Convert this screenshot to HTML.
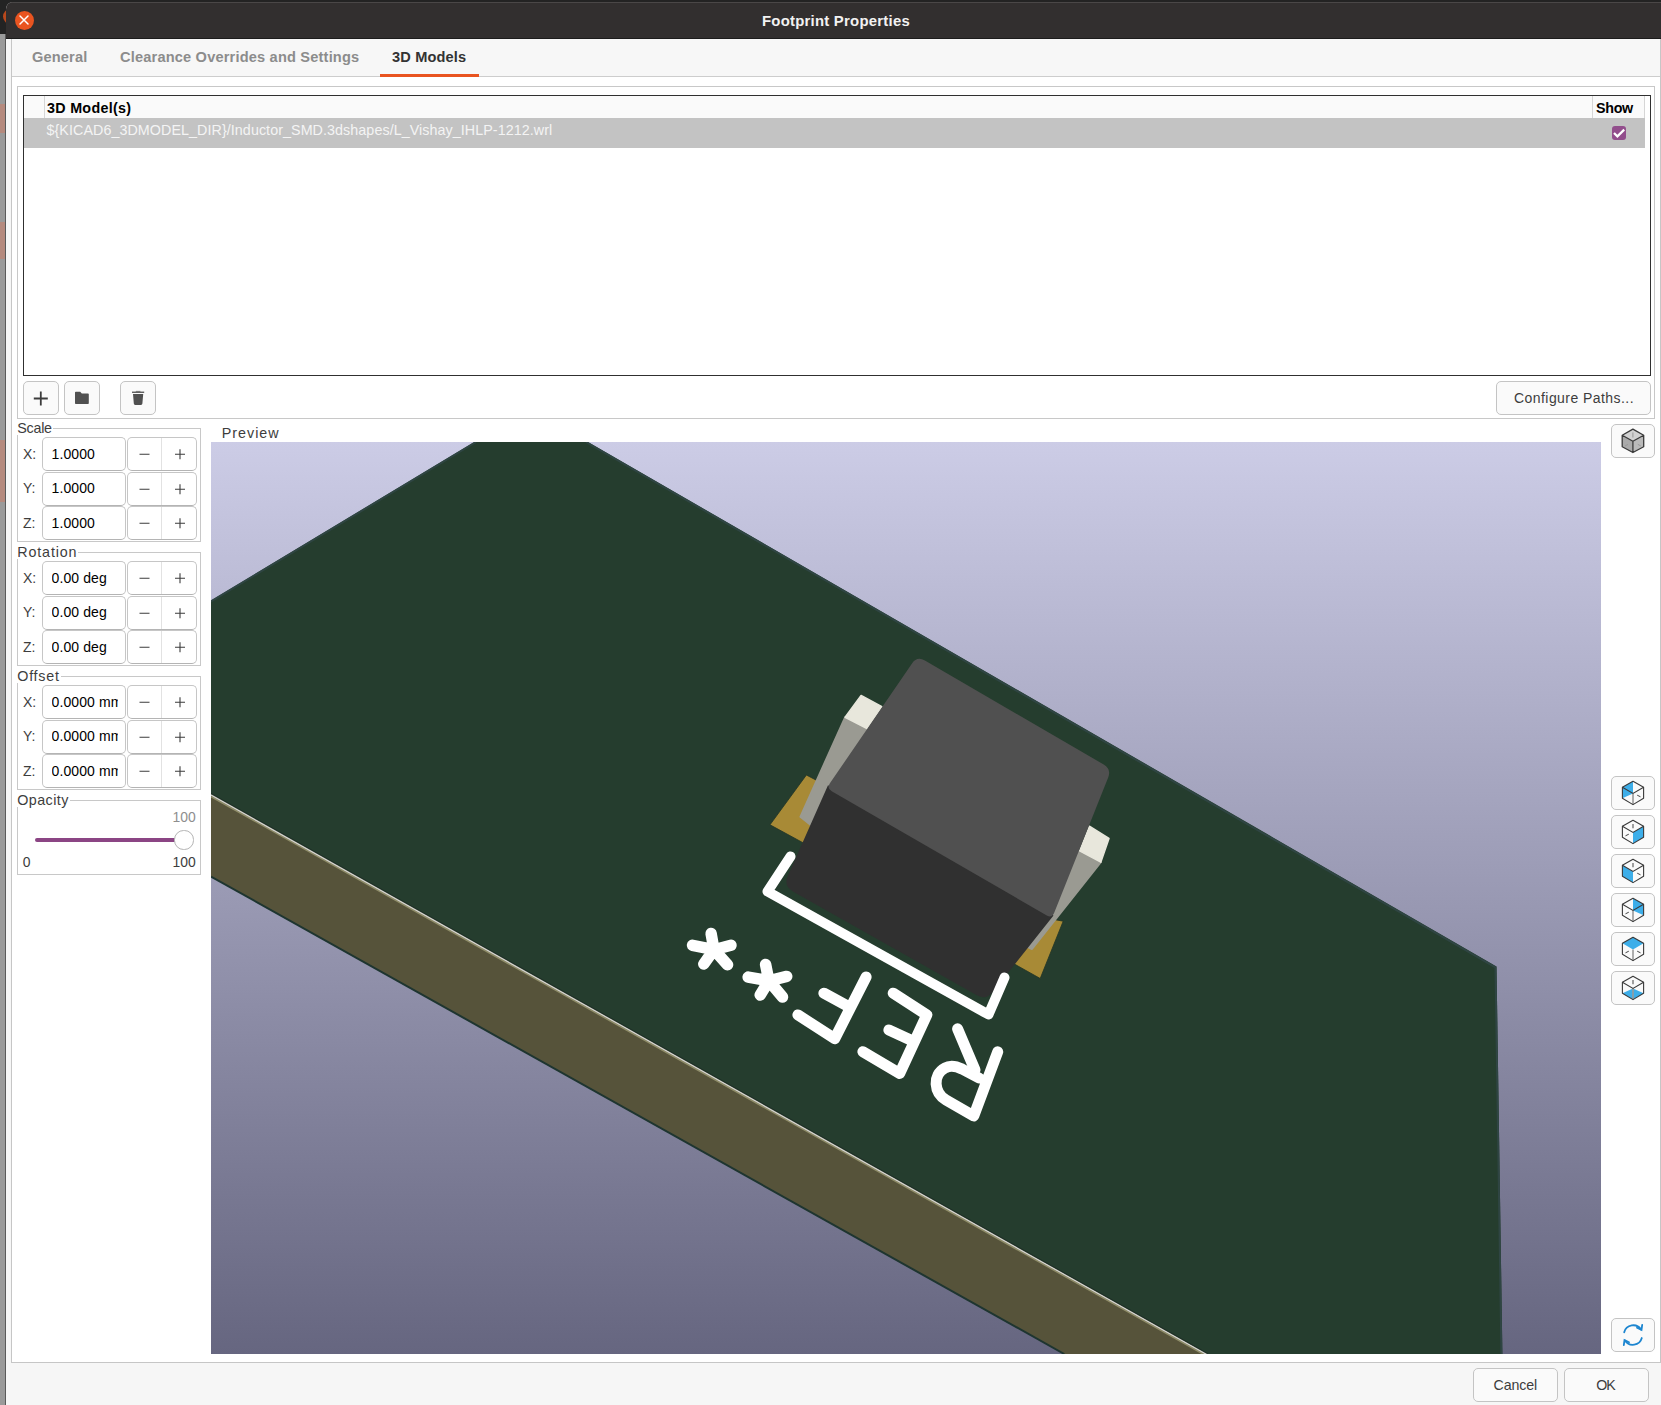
<!DOCTYPE html>
<html><head><meta charset="utf-8"><style>
*{margin:0;padding:0;box-sizing:border-box}
html,body{width:1661px;height:1405px;overflow:hidden;background:#969696;font-family:"Liberation Sans",sans-serif}
.a{position:absolute}
.t{position:absolute;white-space:nowrap;line-height:1}
.btn{position:absolute;background:#fafafa;border:1px solid #c4c4c4;border-radius:5px}
.box{position:absolute;border:1px solid #c8c8c8}
.fld{position:absolute;background:#fff;border:1px solid #c6c6c6;border-bottom-color:#b4b4b4;border-radius:5px}
.spin{position:absolute;background:#fff;border:1px solid #c6c6c6;border-bottom-color:#b4b4b4;border-radius:5px}
.lbl{color:#3d3d3d}
.val{color:#000}
</style></head><body>
<div class="a" style="left:0;top:0;width:1661px;height:1405px;overflow:hidden">
<div class="a" style="left:0;top:0;width:1661px;height:38px;background:#232323"></div>
<div class="a" style="left:0;top:0;width:6px;height:34px;background:#232323"></div>
<div class="a" style="left:0;top:34px;width:6px;height:1371px;background:#9a9a9a"></div>
<div class="a" style="left:0;top:104px;width:6px;height:29px;background:#b58a7e"></div>
<div class="a" style="left:0;top:222px;width:6px;height:37px;background:#b58a7e"></div>
<div class="a" style="left:0;top:440px;width:6px;height:62px;background:#b58a7e"></div>
<div class="a" style="left:5px;top:34px;width:1px;height:1371px;background:#5a5a5a"></div>
<div class="a" style="left:0;top:0;width:6px;height:38px;overflow:hidden"><div class="a" style="left:2.5px;top:9px;width:15px;height:15px;border-radius:50%;background:#b9481c"></div></div>
<div class="a" style="left:6px;top:2px;width:1655px;height:1403px;background:#f6f6f6;border-top-left-radius:7px;overflow:hidden"><div class="a" style="left:0;top:0;width:1655px;height:36px;background:#322f2f;border-top:1px solid #4a4747"></div><div class="a" style="left:0;top:36px;width:1655px;height:1px;background:#1c1c1c"></div></div>
<div class="a" style="left:14.5px;top:10.5px;width:19px;height:19px;border-radius:50%;background:#e95420"></div>
<svg class="a" style="left:14px;top:10px" width="20" height="20"><path d="M6 6L14 14M14 6L6 14" stroke="#fff" stroke-width="1.5" stroke-linecap="round"/></svg>
<div class="t" style="left:762px;top:13.61px;font-size:14.9px;color:#f2f2f2;font-weight:bold;letter-spacing:0.24px;">Footprint Properties</div>
<div class="a" style="left:11px;top:39px;width:1650px;height:1324px;background:#fff;border-left:1px solid #c6c6c6;border-right:1px solid #c6c6c6;border-bottom:1px solid #c6c6c6"></div>
<div class="a" style="left:12px;top:39px;width:1648px;height:38px;background:#f7f7f7;border-bottom:1px solid #cdcdcd"></div>
<div class="a" style="left:380px;top:74px;width:99px;height:3px;background:#e95420"></div>
<div class="t" style="left:32px;top:50.16px;font-size:14.6px;color:#8c8c8c;font-weight:bold;letter-spacing:0.15px;">General</div>
<div class="t" style="left:120px;top:50.16px;font-size:14.6px;color:#8c8c8c;font-weight:bold;letter-spacing:0.18px;">Clearance Overrides and Settings</div>
<div class="t" style="left:392px;top:50.16px;font-size:14.6px;color:#333333;font-weight:bold;letter-spacing:0.15px;">3D Models</div>
<div class="box" style="left:17px;top:86px;width:1638px;height:333px"></div>
<div class="a" style="left:23px;top:95px;width:1628px;height:281px;border:1px solid #303030;background:#fff"></div>
<div class="a" style="left:24px;top:96px;width:1621px;height:22px;background:#fafafa"></div>
<div class="a" style="left:44px;top:96px;width:1px;height:22px;background:#d6d6d6"></div>
<div class="a" style="left:1592px;top:96px;width:1px;height:22px;background:#d6d6d6"></div>
<div class="a" style="left:1644px;top:96px;width:1px;height:22px;background:#d6d6d6"></div>
<div class="a" style="left:24px;top:118px;width:1621px;height:30px;background:#c3c3c3"></div>
<div class="t" style="left:47px;top:100.92px;font-size:14.3px;color:#000;font-weight:bold;letter-spacing:0.3px;">3D Model(s)</div>
<div class="t" style="left:1596px;top:100.92px;font-size:14.3px;color:#000;font-weight:bold;letter-spacing:-0.3px;">Show</div>
<div class="t" style="left:46.5px;top:122.62px;font-size:14.3px;color:#f4f4f4;letter-spacing:0.07px;">${KICAD6_3DMODEL_DIR}/Inductor_SMD.3dshapes/L_Vishay_IHLP-1212.wrl</div>
<div class="a" style="left:1612px;top:126px;width:14px;height:14px;border-radius:3px;background:#924e8c"></div>
<svg class="a" style="left:1612px;top:126px" width="14" height="14"><path d="M2 7L5.4 10.4L12.2 3.6" stroke="#fff" stroke-width="2.2" fill="none"/></svg>
<div class="btn" style="left:23px;top:381px;width:36px;height:34px"></div>
<div class="btn" style="left:64px;top:381px;width:36px;height:34px"></div>
<div class="btn" style="left:120px;top:381px;width:36px;height:34px"></div>
<svg class="a" style="left:23px;top:381px" width="36" height="34"><path d="M17.8 10.5V24.5M10.8 17.5H24.8" stroke="#3c3c3c" stroke-width="1.8"/></svg>
<svg class="a" style="left:64px;top:381px" width="36" height="34"><path d="M11 11.5Q11 10.7 11.8 10.7H16.2L17.8 12.4H24Q24.8 12.4 24.8 13.2V22.3Q24.8 23.1 24 23.1H11.8Q11 23.1 11 22.3Z" fill="#505050"/></svg>
<svg class="a" style="left:120px;top:381px" width="36" height="34"><path d="M12 10.6H24.2V11.9H12Z" fill="#505050"/><path d="M15.8 9.9H20.4V10.6H15.8Z" fill="#505050"/><path d="M13 12.9H23.2L22.4 22.6Q22.3 23.9 21 23.9H15.2Q13.9 23.9 13.8 22.6Z" fill="#505050"/></svg>
<div class="btn" style="left:1496px;top:381px;width:155px;height:34px"></div>
<div class="t" style="left:1514px;top:390.87px;font-size:14.0px;color:#3d3d3d;letter-spacing:0.44px;">Configure Paths...</div>
<div class="t" style="left:221.8px;top:425.92px;font-size:14.3px;color:#3d3d3d;letter-spacing:1.0px;">Preview</div>
<div class="box" style="left:17px;top:428.0px;width:184px;height:114px"></div>
<div class="t" style="left:17.3px;top:420.82px;font-size:14.3px;color:#3d3d3d;letter-spacing:-0.25px;background:#fff;padding-right:1px;">Scale</div>
<div class="fld" style="left:42px;top:437.3px;width:84px;height:34px"></div>
<div class="t" style="left:23px;top:447.17px;font-size:14px;color:#3d3d3d;">X:</div>
<div class="t" style="left:51.5px;top:447.17px;font-size:14px;color:#000;letter-spacing:0.1px;width:66px;overflow:hidden;padding-bottom:4px;">1.0000</div>
<div class="spin" style="left:126.5px;top:437.3px;width:70.5px;height:34px"></div>
<div class="a" style="left:161px;top:438.3px;width:1px;height:32px;background:#e2e2e2"></div>
<svg class="a" style="left:126.5px;top:437.3px" width="71" height="34"><path d="M12.5 17.3H22.5M48 17.3H58M53 12.3V22.3" stroke="#3c3c3c" stroke-width="1.1"/></svg>
<div class="fld" style="left:42px;top:471.6px;width:84px;height:34px"></div>
<div class="t" style="left:23px;top:481.47px;font-size:14px;color:#3d3d3d;">Y:</div>
<div class="t" style="left:51.5px;top:481.47px;font-size:14px;color:#000;letter-spacing:0.1px;width:66px;overflow:hidden;padding-bottom:4px;">1.0000</div>
<div class="spin" style="left:126.5px;top:471.6px;width:70.5px;height:34px"></div>
<div class="a" style="left:161px;top:472.6px;width:1px;height:32px;background:#e2e2e2"></div>
<svg class="a" style="left:126.5px;top:471.6px" width="71" height="34"><path d="M12.5 17.3H22.5M48 17.3H58M53 12.3V22.3" stroke="#3c3c3c" stroke-width="1.1"/></svg>
<div class="fld" style="left:42px;top:505.9px;width:84px;height:34px"></div>
<div class="t" style="left:23px;top:515.77px;font-size:14px;color:#3d3d3d;">Z:</div>
<div class="t" style="left:51.5px;top:515.77px;font-size:14px;color:#000;letter-spacing:0.1px;width:66px;overflow:hidden;padding-bottom:4px;">1.0000</div>
<div class="spin" style="left:126.5px;top:505.9px;width:70.5px;height:34px"></div>
<div class="a" style="left:161px;top:506.9px;width:1px;height:32px;background:#e2e2e2"></div>
<svg class="a" style="left:126.5px;top:505.9px" width="71" height="34"><path d="M12.5 17.3H22.5M48 17.3H58M53 12.3V22.3" stroke="#3c3c3c" stroke-width="1.1"/></svg>
<div class="box" style="left:17px;top:552.0px;width:184px;height:114px"></div>
<div class="t" style="left:17.3px;top:544.82px;font-size:14.3px;color:#3d3d3d;letter-spacing:0.86px;background:#fff;padding-right:1px;">Rotation</div>
<div class="fld" style="left:42px;top:561.3px;width:84px;height:34px"></div>
<div class="t" style="left:23px;top:571.17px;font-size:14px;color:#3d3d3d;">X:</div>
<div class="t" style="left:51.5px;top:571.17px;font-size:14px;color:#000;letter-spacing:0.1px;width:66px;overflow:hidden;padding-bottom:4px;">0.00 deg</div>
<div class="spin" style="left:126.5px;top:561.3px;width:70.5px;height:34px"></div>
<div class="a" style="left:161px;top:562.3px;width:1px;height:32px;background:#e2e2e2"></div>
<svg class="a" style="left:126.5px;top:561.3px" width="71" height="34"><path d="M12.5 17.3H22.5M48 17.3H58M53 12.3V22.3" stroke="#3c3c3c" stroke-width="1.1"/></svg>
<div class="fld" style="left:42px;top:595.6px;width:84px;height:34px"></div>
<div class="t" style="left:23px;top:605.47px;font-size:14px;color:#3d3d3d;">Y:</div>
<div class="t" style="left:51.5px;top:605.47px;font-size:14px;color:#000;letter-spacing:0.1px;width:66px;overflow:hidden;padding-bottom:4px;">0.00 deg</div>
<div class="spin" style="left:126.5px;top:595.6px;width:70.5px;height:34px"></div>
<div class="a" style="left:161px;top:596.6px;width:1px;height:32px;background:#e2e2e2"></div>
<svg class="a" style="left:126.5px;top:595.6px" width="71" height="34"><path d="M12.5 17.3H22.5M48 17.3H58M53 12.3V22.3" stroke="#3c3c3c" stroke-width="1.1"/></svg>
<div class="fld" style="left:42px;top:629.9px;width:84px;height:34px"></div>
<div class="t" style="left:23px;top:639.77px;font-size:14px;color:#3d3d3d;">Z:</div>
<div class="t" style="left:51.5px;top:639.77px;font-size:14px;color:#000;letter-spacing:0.1px;width:66px;overflow:hidden;padding-bottom:4px;">0.00 deg</div>
<div class="spin" style="left:126.5px;top:629.9px;width:70.5px;height:34px"></div>
<div class="a" style="left:161px;top:630.9px;width:1px;height:32px;background:#e2e2e2"></div>
<svg class="a" style="left:126.5px;top:629.9px" width="71" height="34"><path d="M12.5 17.3H22.5M48 17.3H58M53 12.3V22.3" stroke="#3c3c3c" stroke-width="1.1"/></svg>
<div class="box" style="left:17px;top:676.0px;width:184px;height:114px"></div>
<div class="t" style="left:17.3px;top:668.82px;font-size:14.3px;color:#3d3d3d;letter-spacing:0.74px;background:#fff;padding-right:1px;">Offset</div>
<div class="fld" style="left:42px;top:685.3px;width:84px;height:34px"></div>
<div class="t" style="left:23px;top:695.17px;font-size:14px;color:#3d3d3d;">X:</div>
<div class="t" style="left:51.5px;top:695.17px;font-size:14px;color:#000;letter-spacing:0.1px;width:66px;overflow:hidden;padding-bottom:4px;">0.0000 mm</div>
<div class="spin" style="left:126.5px;top:685.3px;width:70.5px;height:34px"></div>
<div class="a" style="left:161px;top:686.3px;width:1px;height:32px;background:#e2e2e2"></div>
<svg class="a" style="left:126.5px;top:685.3px" width="71" height="34"><path d="M12.5 17.3H22.5M48 17.3H58M53 12.3V22.3" stroke="#3c3c3c" stroke-width="1.1"/></svg>
<div class="fld" style="left:42px;top:719.6px;width:84px;height:34px"></div>
<div class="t" style="left:23px;top:729.47px;font-size:14px;color:#3d3d3d;">Y:</div>
<div class="t" style="left:51.5px;top:729.47px;font-size:14px;color:#000;letter-spacing:0.1px;width:66px;overflow:hidden;padding-bottom:4px;">0.0000 mm</div>
<div class="spin" style="left:126.5px;top:719.6px;width:70.5px;height:34px"></div>
<div class="a" style="left:161px;top:720.6px;width:1px;height:32px;background:#e2e2e2"></div>
<svg class="a" style="left:126.5px;top:719.6px" width="71" height="34"><path d="M12.5 17.3H22.5M48 17.3H58M53 12.3V22.3" stroke="#3c3c3c" stroke-width="1.1"/></svg>
<div class="fld" style="left:42px;top:753.9px;width:84px;height:34px"></div>
<div class="t" style="left:23px;top:763.77px;font-size:14px;color:#3d3d3d;">Z:</div>
<div class="t" style="left:51.5px;top:763.77px;font-size:14px;color:#000;letter-spacing:0.1px;width:66px;overflow:hidden;padding-bottom:4px;">0.0000 mm</div>
<div class="spin" style="left:126.5px;top:753.9px;width:70.5px;height:34px"></div>
<div class="a" style="left:161px;top:754.9px;width:1px;height:32px;background:#e2e2e2"></div>
<svg class="a" style="left:126.5px;top:753.9px" width="71" height="34"><path d="M12.5 17.3H22.5M48 17.3H58M53 12.3V22.3" stroke="#3c3c3c" stroke-width="1.1"/></svg>
<div class="box" style="left:17px;top:800px;width:184px;height:75px"></div>
<div class="t" style="left:17.3px;top:792.82px;font-size:14.3px;color:#3d3d3d;letter-spacing:0.43px;background:#fff;padding-right:1px;">Opacity</div>
<div class="t" style="left:172.5px;top:811.15px;font-size:13.9px;color:#8e8e8e;">100</div>
<div class="a" style="left:35px;top:838.2px;width:142px;height:3.6px;border-radius:2px;background:#8b4584"></div>
<div class="a" style="left:174.4px;top:830.4px;width:19.2px;height:19.2px;border-radius:50%;background:#fff;border:1px solid #b4b4b4"></div>
<div class="t" style="left:22.8px;top:855.75px;font-size:13.9px;color:#3d3d3d;">0</div>
<div class="t" style="left:172.5px;top:855.75px;font-size:13.9px;color:#3d3d3d;">100</div>
<div class="btn" style="left:1611px;top:424px;width:44px;height:34px"></div>
<svg class="a" style="left:1611px;top:424px" width="44" height="34"><g transform="translate(-1611 -424)">
<polygon points="1632.9,429.1 1643.7,435.3 1632.9,441.2 1622.2,435.3" fill="#d2d2d2"/>
<polygon points="1622.2,435.3 1632.9,441.2 1632.9,452.5 1622.2,446.8" fill="#aaaaaa"/>
<polygon points="1632.9,441.2 1643.7,435.3 1643.7,446.8 1632.9,452.5" fill="#bababa"/>
<path d="M1632.9,432.5V437.5M1625,446L1628,444.3M1640.8,446L1637.8,444.3" stroke="#999" stroke-width="1"/>
<path d="M1632.9,429.1L1643.7,435.3V446.8L1632.9,452.5L1622.2,446.8V435.3Z M1622.2,435.3L1632.9,441.2L1643.7,435.3 M1632.9,441.2V452.5" stroke="#3a3a3a" stroke-width="1.3" fill="none" stroke-linejoin="round"/>
</g></svg>
<div class="btn" style="left:1611px;top:776px;width:44px;height:34px"></div>
<svg class="a" style="left:1611px;top:776px" width="44" height="34"><g transform="translate(-1611 -776)"><polygon points="1633.0,781.2 1633.0,793.4 1622.4,798.2 1622.4,787.3" fill="#3daee9"/><path d="M1633,793.4V804.6" stroke="#9a9a9a" stroke-width="1.6"/><path d="M1640.5,796.8L1637.2,795.2" stroke="#444" stroke-width="1"/><path d="M1622.4,787.3L1633.0,793.4L1643.6,787.3" stroke="#3a3a3a" stroke-width="1.1" fill="none"/><path d="M1633.0,781.2L1643.6,787.3L1643.6,798.2L1633.0,804.6L1622.4,798.2L1622.4,787.3Z" stroke="#3a3a3a" stroke-width="1.1" fill="none" stroke-linejoin="round"/></g></svg>
<div class="btn" style="left:1611px;top:815px;width:44px;height:34px"></div>
<svg class="a" style="left:1611px;top:815px" width="44" height="34"><g transform="translate(-1611 -815)"><polygon points="1633.0,832.4 1643.6,826.3 1643.6,837.2 1633.0,843.6" fill="#3daee9"/><path d="M1633,824.0V828.2" stroke="#888" stroke-width="1.6"/><path d="M1625.5,835.8L1628.8,834.2" stroke="#444" stroke-width="1"/><path d="M1622.4,826.3L1633.0,832.4L1643.6,826.3" stroke="#3a3a3a" stroke-width="1.1" fill="none"/><path d="M1633.0,820.2L1643.6,826.3L1643.6,837.2L1633.0,843.6L1622.4,837.2L1622.4,826.3Z" stroke="#3a3a3a" stroke-width="1.1" fill="none" stroke-linejoin="round"/></g></svg>
<div class="btn" style="left:1611px;top:854px;width:44px;height:34px"></div>
<svg class="a" style="left:1611px;top:854px" width="44" height="34"><g transform="translate(-1611 -854)"><polygon points="1622.4,865.3 1633.0,871.4 1633.0,882.6 1622.4,876.2" fill="#3daee9"/><path d="M1633,863.0V867.2" stroke="#888" stroke-width="1.6"/><path d="M1640.5,874.8L1637.2,873.2" stroke="#444" stroke-width="1"/><path d="M1622.4,865.3L1633.0,871.4L1643.6,865.3" stroke="#3a3a3a" stroke-width="1.1" fill="none"/><path d="M1633.0,859.2L1643.6,865.3L1643.6,876.2L1633.0,882.6L1622.4,876.2L1622.4,865.3Z" stroke="#3a3a3a" stroke-width="1.1" fill="none" stroke-linejoin="round"/></g></svg>
<div class="btn" style="left:1611px;top:893px;width:44px;height:34px"></div>
<svg class="a" style="left:1611px;top:893px" width="44" height="34"><g transform="translate(-1611 -893)"><polygon points="1633.0,898.2 1643.6,904.3 1643.6,915.2 1633.0,910.4" fill="#3daee9"/><path d="M1633,910.4V921.6" stroke="#9a9a9a" stroke-width="1.6"/><path d="M1625.5,913.8L1628.8,912.2" stroke="#444" stroke-width="1"/><path d="M1622.4,904.3L1633.0,910.4L1643.6,904.3" stroke="#3a3a3a" stroke-width="1.1" fill="none"/><path d="M1633.0,898.2L1643.6,904.3L1643.6,915.2L1633.0,921.6L1622.4,915.2L1622.4,904.3Z" stroke="#3a3a3a" stroke-width="1.1" fill="none" stroke-linejoin="round"/></g></svg>
<div class="btn" style="left:1611px;top:932px;width:44px;height:34px"></div>
<svg class="a" style="left:1611px;top:932px" width="44" height="34"><g transform="translate(-1611 -932)"><polygon points="1633.0,937.2 1643.6,943.3 1633.0,949.4 1622.4,943.3" fill="#3daee9"/><path d="M1633,949.4V960.6" stroke="#9a9a9a" stroke-width="1.6"/><path d="M1625.5,952.8L1628.8,951.2" stroke="#444" stroke-width="1"/><path d="M1640.5,952.8L1637.2,951.2" stroke="#444" stroke-width="1"/><path d="M1633.0,937.2L1643.6,943.3L1643.6,954.2L1633.0,960.6L1622.4,954.2L1622.4,943.3Z" stroke="#3a3a3a" stroke-width="1.1" fill="none" stroke-linejoin="round"/></g></svg>
<div class="btn" style="left:1611px;top:971px;width:44px;height:34px"></div>
<svg class="a" style="left:1611px;top:971px" width="44" height="34"><g transform="translate(-1611 -971)"><polygon points="1622.4,993.2 1633.0,988.4 1643.6,993.2 1633.0,999.6" fill="#3daee9"/><path d="M1633,988.4V999.6" stroke="#9a9a9a" stroke-width="1.6"/><path d="M1633,980.0V984.2" stroke="#888" stroke-width="1.6"/><path d="M1622.4,982.3L1633.0,988.4L1643.6,982.3" stroke="#3a3a3a" stroke-width="1.1" fill="none"/><path d="M1633.0,976.2L1643.6,982.3L1643.6,993.2L1633.0,999.6L1622.4,993.2L1622.4,982.3Z" stroke="#3a3a3a" stroke-width="1.1" fill="none" stroke-linejoin="round"/></g></svg>
<div class="btn" style="left:1611px;top:1318px;width:44px;height:34px"></div>
<svg class="a" style="left:1611px;top:1318px" width="44" height="34"><g fill="none" stroke="#1d86d0" stroke-width="1.8" stroke-linecap="round">
<path d="M13.2 14.3A9.3 9.3 0 0 1 30 11.5"/><path d="M30.8 20A9.3 9.3 0 0 1 14 22.5"/>
<path d="M26 9.7L30.5 11.9L31.2 6.8"/><path d="M18 24.3L13.5 22.1L12.8 27.2"/></g></svg>
<div class="btn" style="left:1473px;top:1368px;width:85px;height:34px"></div>
<div class="btn" style="left:1564px;top:1368px;width:85px;height:34px"></div>
<div class="t" style="left:1493.5px;top:1377.70px;font-size:14.2px;color:#3d3d3d;letter-spacing:-0.1px;">Cancel</div>
<div class="t" style="left:1596.3px;top:1377.70px;font-size:14.2px;color:#3d3d3d;letter-spacing:-1.2px;">OK</div>
<!-- 3D view -->
<svg class="a" style="left:211px;top:442px" width="1390" height="912" viewBox="211 442 1390 912">
<defs><linearGradient id="bg" x1="0" y1="0" x2="0" y2="1"><stop offset="0" stop-color="#cccce6"/><stop offset="1" stop-color="#666680"/></linearGradient></defs>
<rect x="211" y="442" width="1390" height="912" fill="url(#bg)"/>
<polygon points="211,876.5 1064.3,1354 1207.5,1354 211,794" fill="#56533a"/>
<polyline points="211,876.5 1064.3,1354" stroke="#1e3530" stroke-width="2" fill="none"/>
<polygon points="211,600.5 474.3,442 588,442 1496.5,966.4 1502.4,1354 1207.5,1354 211,794" fill="#253d2e"/>
<polyline points="211,601.5 476,442" stroke="#2f4543" stroke-width="2" fill="none"/>
<polyline points="586,442 1495.5,967.4 1501.4,1354" stroke="#2f4543" stroke-width="2" fill="none"/>
<polyline points="211,796.6 1207.5,1356.6" stroke="#8f8d68" stroke-width="1.4" fill="none"/>
<polyline points="211,795 1207.5,1355" stroke="#d6d6d0" stroke-width="1.3" fill="none"/>
<polyline points="211,793.4 1207.5,1353.4" stroke="#1b2b22" stroke-width="0.8" fill="none"/>
<!-- pads -->
<polygon points="806.4,775 835,790 815,850 802.9,842.7 770,824.8" fill="#a88a36" stroke="#1f3326" stroke-width="0.8"/>
<polygon points="1063.2,921.2 1040.2,978.5 1014,963.8 1030,915" fill="#a88a36" stroke="#1f3326" stroke-width="0.8"/>
<!-- terminals -->
<polygon points="845.1,717.3 867,728.5 840,790 812,826 800.4,816.8" fill="#9a9a92" stroke="#9a9a92" stroke-width="2" stroke-linejoin="round"/>
<polygon points="861.1,695.4 881.9,706.6 867,728.5 845.1,717.3" fill="#e8e7dc" stroke="#e8e7dc" stroke-width="1.5" stroke-linejoin="round"/>
<polygon points="1079.6,850.8 1100.8,862.2 1032,949 1025.5,945.8 1040,900" fill="#9a9a92" stroke="#9a9a92" stroke-width="2" stroke-linejoin="round"/>
<polygon points="1089.4,826.2 1109,838.5 1100.8,862.2 1079.6,850.8" fill="#e8e7dc" stroke="#e8e7dc" stroke-width="1.5" stroke-linejoin="round"/>
<!-- component body -->
<path d="M828.0,785.3 L1053.5,915.4 L992.8,991.9 Q986.0,1000.5 976.4,995.1 L792.9,891.4 Q783.3,886.0 787.8,875.9 Z" fill="#303030"/>
<path d="M912.0,663.4 Q917.1,656.0 924.9,660.5 L1103.7,764.5 Q1111.5,769.0 1108.2,777.4 L1054.2,912.8 Q1052.0,918.4 1046.8,915.4 L831.7,791.3 Q826.5,788.3 829.9,783.3 Z" fill="#505050"/>
<!-- silkscreen -->
<g stroke="#ffffff" fill="none" stroke-linecap="round" stroke-linejoin="round">
<polyline points="790.5,856.5 767.5,891.5 988.5,1014.5 1004.5,977.5" stroke-width="10"/>
<g stroke-width="11">
<path d="M997.7,1051.8 L973.8,1115.9 L946,1100 C934,1093 932,1075 945,1068 C950,1065 956,1066 962,1069 L979,1078"/>
<path d="M957.6,1028.8 L975,1070"/>
<path d="M893.2,993.2 L926.8,1014.9 L899.7,1073.4 L862.9,1051.7 M888.9,1030 L914.4,1041.7"/>
<path d="M866.1,976.9 L834.7,1038.7 L797.9,1014.9 M823.9,993.2 L850.5,1007.6"/>
</g>
<g stroke-width="11.5">
<path d="M714,949.7 L711.1,933.5 M714,949.7 L692.5,945.3 M714,949.7 L731,945.3 M714,949.7 L703.8,964 M714,949.7 L727.6,964.8"/>
<path d="M768.9,980.8 L765.6,964.5 M768.9,980.8 L748.2,977.1 M768.9,980.8 L786.7,976.4 M768.9,980.8 L760.2,995 M768.9,980.8 L782.5,997"/>
</g>
</g>
</svg>

</div>
</body></html>
